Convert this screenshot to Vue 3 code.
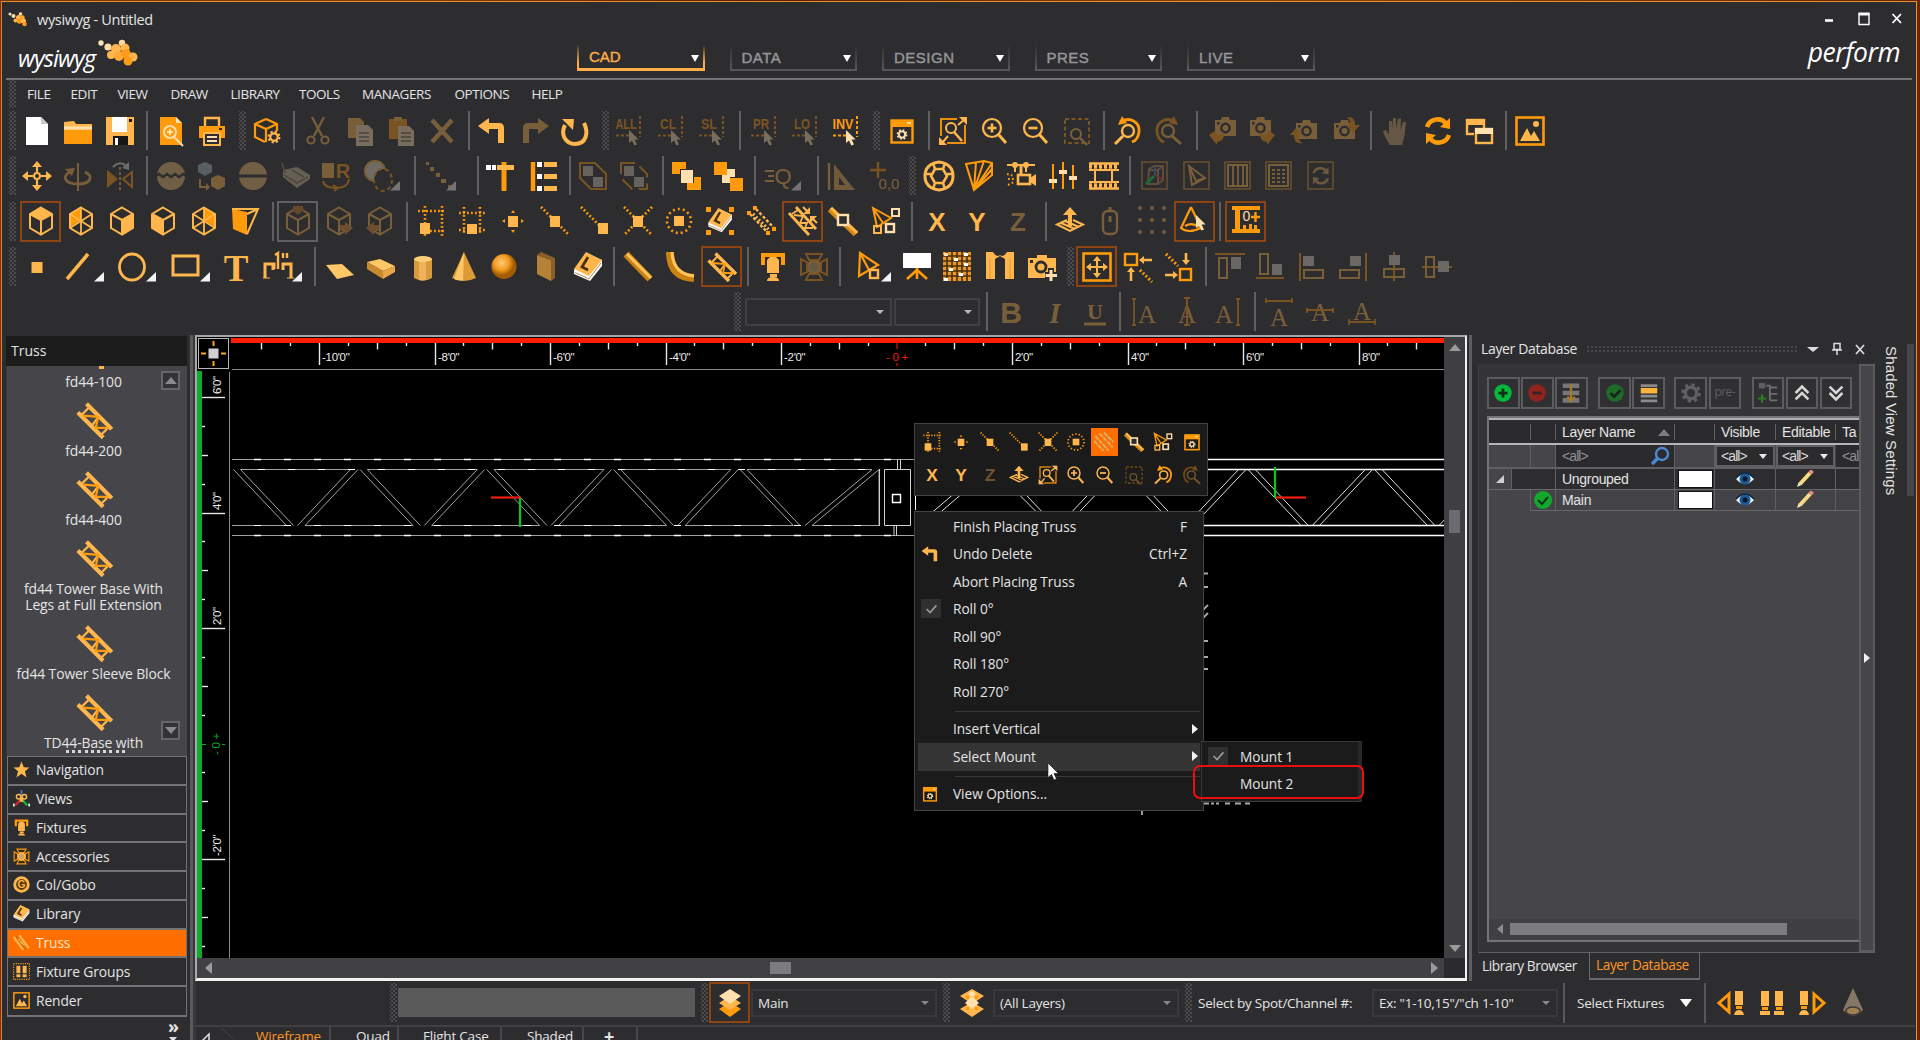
<script setup>
const L = '#ffb64d'
const O = '#ff9a0a'
const W = '#ffffff'
const P = '#ffdfae'
const D = '#2d2d30'

const s = (d, c = L, w = 2, x = '') => `<path d="${d}" fill="none" stroke="${c}" stroke-width="${w}" ${x}/>`
const f = (d, c = L) => `<path d="${d}" fill="${c}"/>`
const t = (v, x, y, size, c = L, x2 = '') =>
  `<text x="${x}" y="${y}" font-size="${size}" fill="${c}" text-anchor="middle" font-family="Liberation Sans, sans-serif" ${x2}>${v}</text>`
const sq = (x, y, w, h, c = L) => `<rect x="${x}" y="${y}" width="${w}" height="${h}" fill="${c}"/>`
const sr = (x, y, w, h, c = L, k = 2) =>
  `<rect x="${x}" y="${y}" width="${w}" height="${h}" fill="none" stroke="${c}" stroke-width="${k}"/>`
const ci = (x, y, r, c = L, k = 2, fill = 'none') =>
  `<circle cx="${x}" cy="${y}" r="${r}" fill="${fill}" stroke="${c}" stroke-width="${k}"/>`
const el = (x, y, rx, ry, c = L, k = 2, fill = 'none') =>
  `<ellipse cx="${x}" cy="${y}" rx="${rx}" ry="${ry}" fill="${fill}" stroke="${c}" stroke-width="${k}"/>`
const dot = 'stroke-dasharray="1.8 2.2"'
const dash = 'stroke-dasharray="3 2"'
const tri = (dx = 0) => `<g transform="translate(${dx} 0)">${f('M39 20V29.5H29Z', '#f2f2f2')}</g>`
const cur = (x, y, c = P) => `<g transform="translate(${x} ${y})">${f('M0 0V13L3 10.4L5.4 15.6L8 14.4L5.6 9.4H9.6Z', c)}</g>`

const hex = 'M15 1.5L26 8V22L15 28.5L4 22V8Z'
const inner = 'M4 8L15 14L26 8M15 14V28'
const cube = (extra = '') => extra + s(hex, L, 2) + s(inner, L, 2)
const sel = (v) =>
  t(v, 11, 12.5, 14, O, 'font-weight="bold" lengthAdjust="spacingAndGlyphs" textLength="' + (v.length > 2 ? 21 : 16) + '"') + s('M1 19.5H18', O, 2, dash) + s('M25 0V21', O, 2, dash) + cur(14, 14)
const mag = (x, y, c = L) => ci(x, y, 9, c, 2.2) + s(`M${x + 6} ${y + 6}L${x + 14} ${y + 15}`, c, 3)
const truss = (c = L) =>
  s('M1.500 8.500L22 29M8.500 1.500L29 22', c, 3.4) + s('M4 11L11 4M13 19L19 11M20 27L27 20', c, 1.8) + s('M6 11L18 12L16 21L26 21', c === L ? O : c, 1.8)
const gear = (x, y, r, c) =>
  ci(x, y, r * 0.62, c, r * 0.38) + `<circle cx="${x}" cy="${y}" r="${r * 0.9}" fill="none" stroke="${c}" stroke-width="${r * 0.35}" stroke-dasharray="${r * 0.36} ${r * 0.347}"/>`
const book = () =>
  f('M1 18L13 1L29 8V14L17 29L1 22Z', W) + f('M1 17L13 0L29 8L16 24Z', L) + s('M15 5L9 15L15 18', '#4b3208', 2.8) + s('M2 20.5L16 27L28 11', '#b98a4a', 1)
const A = (x, y) => t('A', x, y, 25, '#ffb64d', 'style="font-family:Liberation Serif,serif"')
const camera = (dx, dy) =>
  `<g transform="translate(${dx} ${dy})">` + f('M3 6H9L10 3H17L18 6H24V22H3Z') + ci(13.5, 14, 4.2, D, 2.4) + sq(5, 8, 2.5, 2.5, D) + '</g>'
const arrows4 = (a, b, c = L) =>
  s(`M15 ${a}V${b}M${a} 15H${b}`, c, 2) + f(`M15 ${a - 2}l4 5h-8zM15 ${b + 2}l4-5h-8zM${a - 2} 15l5-4v8zM${b + 2} 15l-5-4v8z`, c)
const sync = (c, k) =>
  s('M4 11C7 2 19 1 23 8', c, k) + f('M27 2V13L17 11Z', c) + s('M26 19C23 28 11 29 7 22', c, k) + f('M3 28V17L13 19Z', c)
const framed = (g) => sr(2, 1, 25, 27, '#c98a2e', 1.6) + g

const icons = {
  new: f('M4 1H19L26 8V29H4Z', W) + f('M19 1V8H26Z', '#c9c9c9'),
  open: f('M1 6L11 5L13 8H29V28H1Z', L) + sq(1, 14, 28, 14, O) + sq(1, 10.5, 28, 3, P),
  save: f('M1 1H29V29H1Z', L) + sq(7, 1, 15, 15, W) + sq(8, 20, 15, 9, '#161616') + sq(10, 22, 3, 7, W) + sq(24, 3, 3, 3, '#161616'),
  preview: f('M4 1H20L26 7V29H4Z', O) + f('M20 1V7H26Z', P) + ci(14, 16, 6, P, 2) + s('M18 21L27 30M14 13V19M11 16H17', P, 2),
  print: s('M8 10V2H22V10', L, 2.4) + f('M2 10H28V22H23V18H7V22H2Z', O) + sr(7, 17, 16, 12, L, 2) + s('M10 21H20M10 25H20', P, 2) + sq(22, 12, 3, 2, D),
  cubegear: s('M14 3L25 8V15M14 3L3 8V21L13 26M3 8L14 13L25 8M14 13V26', O, 2.2) + gear(22, 21, 6, L),
  cut: s('M9 1L19 20M21 1L11 20', L, 2.4) + ci(8, 24, 3.6) + ci(22, 24, 3.6),
  copy: f('M2 2H14L18 6V22H2Z') + f('M10 9H22L27 14V30H10Z', P) + s('M13 17H23M13 21H23M13 25H23', '#7a6a50', 1.6),
  paste: sq(2, 3, 18, 20, O) + sq(7, 1, 8, 4, L) + f('M11 10H22L27 15V30H11Z', P) + s('M14 17H24M14 21H24M14 25H24', '#7a6a50', 1.6),
  del: s('M5 4L25 26M25 4L5 26', L, 4.5),
  undo: f('M1 10L12 2V7H22Q27 7 27 12V27H21V13H12V18Z', L),
  redo: f('M29 10L18 2V7H8Q3 7 3 12V27H9V13H18V18Z', L),
  reload: s('M5 9C0 19 6 28 15 28C26 28 29 17 24 7', L, 4) + f('M2 3H14L13 14Z', L),
  all: sel('ALL'), cl: sel('CL'), sl: sel('SL'), pr: sel('PR'), lo: sel('LO'), inv: sel('INV'),
  viewopt: sr(4.5, 4.5, 21, 22, O, 2.4) + sq(4, 4, 22, 7, O) + sq(20, 6, 4, 2, P) + gear(15, 18.5, 5, P),
  fit: sr(3, 3, 24, 24, O, 1.8) + sq(19, 0, 11, 9, D) + sq(0, 20, 9, 10, D) + ci(13, 12, 5, L, 2) + s('M16 16L24 25', L, 2.6) + s('M20 9L27 3M10 20L4 27', L, 2) + f('M21 1H29V9ZM1 21V29H9Z', L),
  zin: mag(12, 12) + s('M7.5 12H16.500M12 7.500V16.500', L, 2.6),
  zout: mag(12, 12) + s('M7.500 12H16.500', L, 2.6),
  zsel: sr(3, 3, 24, 24, O, 2).replace('/>', ' stroke-dasharray="4 2.500"/>') + ci(14, 18, 5, L, 2) + s('M18 22L25 29', L, 2.400),
  zprev: ci(16, 15, 6, L, 2.4) + s('M11 20L3 28', L, 3) + s('M8 6C18 0 28 6 27 16Q26 24 20 26', O, 2.8) + f('M6 9L10 0L15 7Z', O),
  znext: ci(14, 15, 6, L, 2.4) + s('M18 20L27 28', L, 3) + s('M22 6C12 0 2 6 3 16Q4 24 10 26', O, 2.8) + f('M24 9L20 0L15 7Z', O),
  cam1: camera(4, -2) + f('M1 19L8 14V18Q14 20 16 16Q17 25 9 26V29Z', O),
  cam2: camera(0, -2) + f('M28 19L21 14V18Q15 20 13 16Q12 25 20 26V29Z', O),
  cam3: camera(4, 1) + f('M1 19L7 12L14 19H10V22Q10 26 14 27Q5 29 5 19Z', O),
  cam4: camera(0, 1) + f('M16 1Q24 0 24 9H29L22 17L15 9H19Q20 4 16 1Z', O),
  hand: f('M9 29Q3 20 2 15L5 14L8 18V5H11V13L12 2H15V13L17 2.500H20L19.500 14L22 6H25L23.500 20L21 29Z', '#c9a468'),
  sync: sync(O, 4.5),
  windows: sr(3, 4, 17, 14, L, 2.4) + sq(2, 3, 19, 6, L) + sq(10, 12, 18, 17, D) + sr(12, 13, 16, 14, L, 2.4) + sq(11, 12, 18, 6, P),
  image: sr(1.500, 1.500, 27, 27, O, 2.600) + f('M5 25L12 12L16 20L19 15L25 25Z', L) + `<circle cx="21" cy="8" r="3" fill="${L}"/>`,

  move: ci(15, 15, 3, L, 2) + s('M15 3V11M15 19V27M3 15H11M19 15H27', L, 2.200) + f('M15 0l5 6h-10zM15 30l5-6h-10zM0 15l6-5v10zM30 15l-6-5v10z'),
  rot: s('M15 2V30', L, 2) + s('M8 10C-3 16 3 23 15 23C28 23 31 15 22 11', L, 2.800) + f('M2 8L12 7L9 15Z'),
  mirror: s('M15 6V30', L, 1.8, dash) + f('M2 9L13 18L2 27Z', O) + s('M27 11L18 18L27 26Z', O, 2) + s('M8 6Q15-1 21 5', '#ddd', 2.200) + f('M24 1V9L17 7Z', '#ddd'),
  egg: el(15, 15, 14, 14, 'none', 0, '#e9b76a') + s('M0 15L3 13L7 16L11 13L15 16L19 13L23 16L27 13L30 15', D, 2.400),
  cubes: f('M8 1L15 4V11L8 15L1 11V4Z', '#a8b4bd') + f('M21 14L28 17V25L21 29L14 25V17Z', L) + s('M3 18V26H10', L, 2) + f('M9 22L13 26L9 30Z'),
  split: el(15, 15, 14, 14, 'none', 0, '#e9b76a') + sq(0, 13.500, 30, 3, D),
  surf: f('M3 9L17 6L30 14V18L17 27L3 16Z', '#c9b894') + s('M4 14L17 22L28 16M2 2L5 12M12 9L24 16', '#8a7a5a', 1.800),
  r3d: sq(1, 2, 12, 15, L) + t('R', 22, 17, 20, O, 'font-weight="bold"') + s('M2 20Q3 27 15 27Q27 27 28 18M12 24L17 27L13 30', O, 2),
  ovals: el(11, 10, 10, 10, L, 2, '#e8d9bd') + el(19, 19, 9, 11, O, 2, D).replace('/>', ' stroke-dasharray="4 3"/>') + tri(-3),
  steps: sq(1, 1, 3, 3) + sq(5, 6, 4, 4) + sq(11, 12, 4, 4) + sq(16, 18, 5, 4) + sq(23, 24, 5, 5) + tri(-8),
  t1: s('M18 1V30', O, 5) + sq(11, 4, 17, 5, L) + sq(0, 4, 5, 5, W) + sq(6, 4, 4, 5, W),
  t2: s('M4 1V30', O, 4.500) + [1, 13, 25].map((y) => sq(8, y, 5, 5, W) + sq(15, y, 13, 5, L)).join(''),
  oct1: s('M2 2H17L28 13V28H13L2 17Z', O, 2) + sq(5, 5, 10, 10, '#cbbfae') + sq(15, 16, 10, 10, '#cbbfae'),
  oct2: s('M2 2H17L28 13V28H13L2 17Z', O, 2, 'stroke-dasharray="14 6"') + sq(5, 5, 10, 10, '#cbbfae') + sq(15, 16, 10, 10, '#cbbfae'),
  lay1: sq(0, 1, 14, 12, O) + sq(15, 16, 14, 13, O) + sq(8, 8, 14, 14, D) + sq(9, 9, 12, 13, P),
  lay2: sq(14, 8, 8, 8, P) + sq(9, 14, 8, 8, P) + sq(1, 1, 13, 13, O) + sq(17, 17, 13, 13, O),
  q: t('Q', 18, 23, 22, L) + s('M0 10H9M3 15H9M0 20H9', L, 2) + tri(-3),
  setsq: s('M3 2V29', L, 2.400) + f('M8 3V29H29ZM13 16L19 24H13Z', '#e9a94f'),
  origin: s('M9 1V17M1 9H17', O, 2.400) + t('0,0', 20, 28, 15, L),
  globe: s('M15 1Q29 3 29 15Q29 27 15 29Q1 27 1 15Q1 3 15 1Z', L, 3) + s('M11 8H19L23 15L19 22H11L7 15Z', L, 2.600) + s('M9 2L11 8M21 2L19 8M9 28L11 22M21 28L19 22M1 13H7M29 13H23', L, 2.400),
  fan: s('M2 3L20 0L28 2V14L10 29ZM2 3L10 29M12 1L10 29M20 0L10 29M28 2L10 29M28 8L10 29', O, 2) ,
  movcam: s('M1 4H29M9 4V11M20 4V11', L, 2) + ci(9, 4, 2) + ci(20, 4, 2) + s('M15 4V13', L, 3) + sr(12, 14, 12, 9, L, 2.600) + f('M24 17L30 13V25L24 21Z') + s('M1 13L8 15M2 18H8M2 24L8 21', O, 2, dot),
  sliders: s('M5 3V28M15 1V28M25 4V28', O, 2) + sq(1, 18, 8, 4, P) + sq(11, 9, 8, 4, P) + sq(21, 15, 8, 4, P),
  film: s('M0 2.500H30M0 27.500H30', L, 2.600) + s('M0 9H30M0 21H30M6 9V21M23 9V21', L, 2) + s('M0 5.500H30M0 24.500H30', L, 4.500, dash),
  rgb: framed(s('M9 8L14 5H23V19L18 23H8ZM8 9H18V23M18 9L23 5', '#b8874a', 2) + s('M15 14V5', '#3c7adf', 2) + s('M15 14L22 18', '#e33', 2) + s('M14 15L6 23', '#0d4', 2.600)),
  fanb: framed(s('M7 5L23 17L10 24ZM7 5L14 20L23 17', L, 2)),
  cols: framed(sr(5, 4, 19, 21, L, 2) + s('M10 4V25M15 4V25M20 4V25', L, 1.800)),
  grid: framed(sr(5, 4, 19, 21, L, 2) + s('M8 9H22M8 13H22M8 17H22M8 21H22', L, 1.800, dash)),
  syncb: framed(`<g transform="translate(5 5) scale(.65)">${sync('#d8a55c', 4)}</g>`),

  ctop: cube(f('M15 1.500L26 8L15 14L4 8Z')),
  cwl: f('M4 8L15 1.500V14L4 21Z', O) + s(hex, L, 2) + s('M15 2V28M4 8L26 22M26 8L4 22', L, 1.800),
  cright: cube(f('M15 14L26 8V22L15 28.500Z')),
  cleft: cube(f('M15 14L4 8V22L15 28.500Z')),
  cwr: f('M26 8L15 1.500V14L26 21Z', O) + s(hex, L, 2) + s('M15 2V28M4 8L26 22M26 8L4 22', L, 1.800),
  cpersp: f('M2 3L17 6V29L3 23Z', O) + s('M2 3H28L17 28M17 8L28 3', L, 2),
  cdown: cube() + f('M10 0H20V3H22L15 9L8 3H10Z', '#c77b2a'),
  cbr: cube() + f('M16 19H21V16L29 22L21 29V25H16Z', '#e08a3a'),
  cbl: cube() + f('M14 19H9V16L1 22L9 29V25H14Z', '#e08a3a'),
  g1: s('M2 5H29M10 25H29', O, 2.600, dot) + s('M9 0V30M26 0V30', O, 2.600, dot) + sq(4, 17, 10, 11, L),
  g2: s('M2 7H28M2 24H28', O, 2.600, dot) + s('M7 1V29M23 1V29', O, 2.600, dot) + sq(10, 18, 10, 10, L),
  sdot: sq(10, 10, 10, 11, L) + f('M13 7L15 4L17 7ZM13 24L15 27L17 24ZM7 13L4 15L7 17ZM23 13L26 15L23 17Z', O),
  mid: s('M1 1L29 29', O, 2.800, dot) + sq(10, 10, 10, 11, L),
  end: s('M1 1L20 20', O, 2.800, dot) + sq(18, 17, 10, 11, L),
  inter: s('M1 1L29 29M29 1L1 29', O, 2.800, dot) + sq(10, 10, 10, 11, L),
  circ: ci(15, 15, 12, O, 2.600).replace('/>', ' stroke-dasharray="2 3"/>') + sq(10, 10, 10, 10, L),
  libs: sq(1, 1, 5, 5, O) + sq(24, 1, 5, 5, O) + sq(1, 24, 5, 5, O) + sq(24, 24, 5, 5, O) + `<g transform="translate(2.500 2) scale(.84)">${book()}</g>`,
  trs1: s('M4 8L22 27M10 3L28 22', L, 2.400, dash) + s('M7 8L24 25', L, 3.4, dot) + sq(1, 5, 4, 4, O) + sq(7, 0, 4, 4, O) + sq(20, 25, 4, 4, O) + sq(26, 21, 4, 4, O),
  trs2: s('M1 7L21 29M8 1L28 23', L, 2.800) + s('M4 8L10 4M6 9L15 10L12 17L19 17L17 22L25 22', L, 1.800) + s('M15 1L20 6M29 17L24 12', L, 2) + f('M22 1V8H15ZM22 10H29L22 17Z'),
  pnode: s('M2 3L28 28', '#d48a14', 6.500) + s('M3 2L29 27', L, 3) + `<rect x="10" y="9" width="10" height="10" fill="${D}" stroke="${P}" stroke-width="2.400"/>`,
  focus: s('M2 2L20 12L6 21ZM2 2L12 17', O, 2) + sr(21, 3, 7, 7, P, 2) + sr(3, 20, 7, 7, L, 2) + sr(15, 18, 8, 8, P, 2.400),
  x: t('X', 15, 24.500, 26, L, 'font-weight="bold"'), y: t('Y', 15, 24.500, 26, L, 'font-weight="bold"'), z: t('Z', 15, 24.500, 26, L, 'font-weight="bold"'),
  upl: f('M15 1L22 9H17V20H13V9H8Z') + s('M12 14L2 18.500L15 25L28 18.500L18 14M6 17L20 23M10 15L24 21', L, 2),
  mouse: `<rect x="8" y="5" width="14" height="23" rx="5" fill="none" stroke="${L}" stroke-width="2.400"/>` + s('M15 1V5M15 10V16', L, 3),
  dots: [3, 15, 27].map((y) => [3, 15, 27].map((x) => `<circle cx="${x}" cy="${y - 1}" r="1.900" fill="${L}"/>`).join('')).join(''),
  conec: s('M11 1L1 22Q8 28 21 22L11 1M5 20Q12 16 19 21', O, 2.200) + cur(16, 9),
  ruler: sq(1, 0, 28, 4, O) + sq(1, 23, 28, 4, O) + sq(4, 3, 5, 22, O) + sq(12, 19, 3, 5, O) + sq(18, 18, 3, 6, O) + sq(23, 19, 3, 5, O) + t('0', 15.500, 15, 14, P) + s('M20 11H29M24.500 6V16', O, 2.400),

  sq: sq(9.500, 10, 11, 11, L),
  line: s('M2 27L23 2', L, 3.500) + tri(),
  circle: el(15, 15, 12.5, 13, L, 2.800) + tri(),
  rect: sr(2, 4, 25, 19, L, 3) + tri(),
  T: t('T', 15, 28.500, 37, L, 'style="font-family:Liberation Serif,serif;font-weight:bold"'),
  dim: s('M2 26V12H11V17M10 18V12M28 26V12H20V18', L, 3) + s('M0 26H7M24 26H31', L, 1) + s('M12 3L15 1V17M20 1V6M24 1V6', L, 2.400) + tri(),
  plane: f('M1 13L17 12L29 23L12 27Z', '#ffc765'),
  box: f('M1 10L14 7L29 14L17 19Z', '#ffc765') + f('M1 10L17 19V27L1 17Z', '#c98a2e') + f('M17 19L29 14V20L17 27Z', '#e9a546'),
  cyl: f('M6 7V26Q15 31 24 26V7Z', '#d99a3e') + f('M11 9V28Q15 29 18 28V9Z', '#eeb25a') + el(15, 7, 9, 3, L, 0, '#ffcf78'),
  cone: f('M15 0L27 26Q15 32 3 26Z', '#e09a35') + f('M15 0L14 28.500Q8 28.500 5 27Z', '#ffc765'),
  sphere: `<defs><radialGradient id="ball" cx=".4" cy=".35"><stop offset="0" stop-color="#ffcb75"/><stop offset=".6" stop-color="#f29a20"/><stop offset="1" stop-color="#a45c00"/></radialGradient></defs><circle cx="15" cy="14.500" r="12.500" fill="url(#ball)"/>`,
  panel: f('M6 3L20 8V29L6 22Z', '#b58038') + f('M6 3L10 0L24 6V26L20 29V8Z', '#8a6028'),
  lib: book(),
  pipe: s('M3 2L27 27', '#c98210', 7) + s('M4 2L28 26', '#ffc35c', 3),
  curve: s('M4 0Q4 25 28 26', '#c98210', 8) + s('M6 0Q7 22 28 24', '#ffc35c', 3),
  truss: truss(),
  fixture: s('M5 13V3H25V13', O, 4) + f('M9 8L12 5H18L21 8V21H9Z') + sq(12, 22, 7, 3, L) + f('M9 29Q9 25 15 25Q21 25 21 29Z'),
  acc: ci(15, 15, 6, L, 3, '#c9a468') + s('M7 2H23L20 8H10ZM7 28H23L20 22H10ZM2 7V23L8 20V10ZM28 7V23L22 20V10Z', O, 2),
  fix2: s('M3 1L21 13L2 24ZM3 1L12 18', O, 2.200) + sr(13, 18, 8, 8, L, 2.400) + tri(-5),
  screen: sq(1, 1, 28, 15, W) + s('M15 16V27M15 18L5 27M15 18L25 27', O, 2.600),
  led: sq(1, 0, 28, 29, '#e9972c') + [4, 9, 14, 19, 24].map((v) => s(`M1 ${v}H29M${v + 1} 0V29`, '#4a3010', 1.600)).join('') + sq(2, 1, 4, 3, P) + sq(12, 6, 4, 3, W) + sq(22, 11, 4, 3, W) + sq(7, 16, 4, 3, W) + sq(17, 21, 4, 3, W) + sq(2, 26, 4, 3, W) + sq(22, 1, 4, 3, W),
  curtain: f('M1 0H8Q12 6 15 3Q18 6 22 0H29V27H20V7L15 4L10 7V27H1Z') + s('M5 6V27M25 6V27', '#e09a35', 1),
  camadd: `<g transform="translate(-1 -1)">` + f('M2 7H11V4H21V7H30V27H2Z') + ci(15, 16, 5, D, 2.8) + sq(4, 9, 3, 3, D) + '</g>' + s('M24 16V30M18 23H30', D, 6) + s('M24 18V29M18.500 23.500H30', P, 3),
  movebox: sr(1.500, 1.500, 27, 27, O, 2.600) + arrows4(6, 24, L),
  tl: sr(2, 2, 12, 11, O, 2.400) + s('M18 8H29M8 18V29', L, 2.600) + f('M16 8l5-4v8zM8 15l4 5h-8z') + s('M17 18L29 30', O, 3.200, dot),
  br: sr(16, 17, 11, 11, O, 2.400) + s('M1 23H12M22 1V10', L, 2.600) + f('M14 23l-5-4v8zM22 13l4-5h-8z') + s('M2 2L14 14', O, 3.200, dot),
  a1: s('M0 2H30', O, 2) + sr(4, 6, 8, 20) + sq(16, 5, 10, 12, '#d9cfc2'),
  a2: s('M0 26H28', O, 2) + sr(4, 2, 8, 20) + sq(16, 12, 10, 11, '#d9cfc2'),
  a3: s('M2 1V29', O, 2) + sq(5, 4, 11, 10, '#d9cfc2') + sr(6, 18, 19, 8),
  a4: s('M28 1V29', O, 2) + sq(12, 4, 11, 10, '#d9cfc2') + sr(2, 18, 19, 8),
  a5: s('M15 0V29', O, 2) + sq(10, 3, 11, 10, '#d9cfc2') + sr(5, 17, 20, 8),
  a6: s('M0 15H30', O, 2) + sr(4, 5, 8, 20) + sq(16, 9, 11, 11, '#d9cfc2'),
  B: t('B', 15, 26, 30, L, 'font-weight="bold"'),
  I: t('I', 15, 26, 29, L, 'style="font-family:Liberation Serif,serif;font-style:italic;font-weight:bold"'),
  U: t('U', 15, 22, 22, L, 'style="font-family:Liberation Serif,serif;font-weight:bold"') + sq(4, 25.500, 22, 3),
  A1: A(18, 26) + s('M5 2V28M3 2H7M3 28H7', O, 1.800), A2: A(15, 26) + s('M15 1V28M12 1H18M12 28H18', O, 2), A3: A(11, 26) + s('M25 2V28M23 2H27M23 28H27', O, 1.800),
  A4: A(15, 29) + s('M2 4H28M2 1V6M28 1V6', O, 1.800), A5: A(15, 24) + s('M2 13H28M2 11V16M28 11V16', O, 2), A6: A(15, 23) + s('M2 25H28M2 22V28M28 22V28', O, 1.800),

  layers: f('M15 14L26 21L15 29L4 21Z', O) + f('M15 8L26 15L15 22L4 15Z', L) + f('M15 1L26 8L15 16L4 8Z', P),
  layers2: f('M15 14L27 21L15 29L3 21Z', L) + f('M15 1L27 8L15 16L3 8Z', L) + f('M15 8L22 15L15 21L8 15ZM15 3L19 6L15 9L11 6Z', P) + f('M9 8h3v3h-3zM18 8h3v3h-3zM9 19h3v3h-3zM18 19h3v3h-3z', O),
  fprev: s('M13 6L3 15L13 24Z', O, 3) + sq(19, 3, 8, 14) + sq(20, 18, 6, 3, O) + f('M18 27Q19 22 23 22Q27 22 28 27Z'),
  fboth: sq(4, 3, 8, 15) + sq(18, 3, 8, 15) + sq(5, 19, 6, 3, O) + sq(19, 19, 6, 3, O) + sq(3, 23, 10, 4) + sq(17, 23, 10, 4),
  fnext: s('M17 6L27 15L17 24Z', O, 3) + sq(3, 3, 8, 14) + sq(4, 18, 6, 3, O) + f('M2 27Q3 22 7 22Q11 22 12 27Z'),
  spot: f('M15 0L25 22Q15 33 5 22Z', '#857866') + el(15, 23, 7, 4, '#3a3a3c', 1.500, '#a08050'),

  star: f('M15 1L19 11L29 11.500L21 18L24 29L15 22.500L6 29L9 18L1 11.500L11 11Z'),
  views: s('M15 0V9', '#3f78d8', 3) + s('M14 17L4 27', '#d22', 4) + s('M16 17L25 27', '#1b3', 4) + ci(10, 12, 4, L, 2.600) + ci(20, 12, 4, L, 2.600) + sq(12, 12, 6, 9, L) + sq(0, 24, 3, 5, '#eee') + sq(27, 24, 3, 5, '#eee'),
  gobo: ci(15, 15, 12, L, 5, '#5a3a10') + t('G', 15, 21, 18, L, 'font-weight="bold"'),
  trs: s('M1 5L18 28M11 2L28 25', '#ffb64d', 4) + s('M5 4L22 27', '#c96a10', 2) + s('M9 9L17 16M13 15L22 20', '#ffb64d', 2),
  trsel: s('M2 6L22 28M8 2L28 23M0 13L14 28M15 1L29 15', '#d9b06a', 3, 'stroke-dasharray="7 1.500"'),
  groups: sr(1, 1, 28, 28, O, 2).replace('/>', ' stroke-dasharray="2 2"/>') + sq(6, 5, 7, 13) + sq(17, 5, 7, 13) + sq(6, 20, 7, 5) + sq(17, 20, 7, 5),
}

const W0 = { '|': 2, ':': 7 }
function row(src, start = 0) {
  let pos = start
  return src.trim().split(/\s+/).map((tok) => {
    let [name, x] = tok.split('@')
    const dim = name[0] === '!'
    if (dim) name = name.slice(1)
    const on = name[0] === '#'
    const off = name[0] === '%'
    if (on || off) name = name.slice(1)
    const w = W0[name] || (on || off ? 41 : 30)
    const left = +x - w / 2
    const gap = left - pos
    pos = left + w
    return { name, dim, on, off, w, gap }
  })
}

const rows = [
  row(`:@12 new@37 open@78 save@120 |@147 preview@171 print@212 :@242 cubegear@267 |@294 !cut@318 !copy@361 !paste@402 !del@442 |@469
    undo@492 !redo@535 reload@575 :@605 !all@630 !cl@672 !sl@713 |@740 !pr@765 !lo@806 inv@847 :@876 viewopt@902 |@929 fit@953 zin@995 zout@1036
    !zsel@1077 |@1104 zprev@1127 !znext@1169 |@1197 !cam1@1223 !cam2@1262 !cam3@1304 !cam4@1346 |@1371 !hand@1396 sync@1438 windows@1479 |@1506 image@1530`),
  row(`:@12 move@37 !rot@78 !mirror@120 |@147 !egg@171 !cubes@212 !split@253 !surf@295 !r3d@336 !ovals@379 |@415 !steps@440 |@478 t1@501 t2@544 |@570
    !oct1@593 !oct2@634 |@663 lay1@687 lay2@728 |@755 !q@780 |@818 !setsq@841 !origin@884 :@912 globe@939 fan@979 movcam@1021 sliders@1063 film@1104
    |@1130 !rgb@1155 !fanb@1197 !cols@1238 !grid@1279 !syncb@1321`),
  row(`:@12 #ctop@40.5 cwl@81 cright@122 cleft@163 cwr@204 cpersp@245 |@273 !%cdown@297.5 !cbr@339 !cbl@380 |@407 g1@431 g2@472 sdot@513 mid@555 end@595 inter@638
    circ@679 libs@720 trs1@761 #trs2@802.5 pnode@843 focus@886 |@912 x@937 y@977 !z@1018 |@1046 upl@1070 !mouse@1110 !dots@1152 #conec@1194.5 |@1220 #ruler@1245.5`),
  row(`:@12 sq@37 line@80 circle@132 rect@186 T@236 dim@278 |@315 plane@340 box@381 cyl@423 cone@464 sphere@504 panel@546 lib@588 |@614 pipe@638 curve@681
    #truss@721.5 |@748 fixture@773 !acc@814 |@840 fix2@872 screen@917 led@957 curtain@1000 camadd@1042 :@1070 #movebox@1096.5 tl@1138 br@1179 |@1206
    !a1@1230 !a2@1271 !a3@1313 !a4@1353 !a5@1394 !a6@1437`),
]
const fontRow = row('|@987 !B@1011 !I@1055 !U@1095 |@1120 !A1@1144 !A2@1187 !A3@1228 |@1255 !A4@1279 !A5@1320 !A6@1362', 980)

const tabs = ['CAD', 'DATA', 'DESIGN', 'PRES', 'LIVE']
const menus = [['FILE', 43.5], ['EDIT', 47], ['VIEW', 53], ['DRAW', 60], ['LIBRARY', 68.5], ['TOOLS', 63], ['MANAGERS', 92.5], ['OPTIONS', 77], ['HELP', 60]]
const pieces = ['fd44-200', 'fd44-400', 'fd44 Tower Base With\nLegs at Full Extension', 'fd44 Tower Sleeve Block', 'TD44-Base with']
const nav = [['star', 'Navigation'], ['views', 'Views'], ['fixture', 'Fixtures'], ['acc', 'Accessories'], ['gobo', 'Col/Gobo'], ['lib', 'Library'], ['trs', 'Truss'], ['groups', 'Fixture Groups'], ['image', 'Render']]

const mini = ['g1', 'sdot', 'mid', 'end', 'inter', 'circ', 'trsel', 'pnode', 'focus', 'viewopt', 'x', 'y', '!z', 'upl', 'fit', 'zin', 'zout', '!zsel', 'zprev', '!znext']
const context = [
  { label: 'Finish Placing Truss', key: 'F' },
  { label: 'Undo Delete', key: 'Ctrl+Z', icon: 'undo' },
  { label: 'Abort Placing Truss', key: 'A' },
  { label: 'Roll 0°', check: true },
  { label: 'Roll 90°' },
  { label: 'Roll 180°' },
  { label: 'Roll 270°' },
  { sep: true },
  { label: 'Insert Vertical', sub: true },
  { label: 'Select Mount', sub: true, hot: true },
  { sep: true },
  { label: 'View Options...', icon: 'viewopt' },
]

// Drawing surface: origin is the upper-left corner inside the view frame
const OX = 197
const OY = 337
const X0 = 897.5 - OX
const Y0 = 744.5 - OY
const step = 115.5
const hTicks = []
for (let q = -23; q <= 18; q++) {
  const x = Math.round(X0 + (q * step) / 4) - 1
  if (q === 0 || x < 36 || x > 1245) continue
  const major = q % 4 === 0
  hTicks.push({ x, h: major ? 22 : q % 2 === 0 ? 6.5 : 3, label: major && `${q / 2}'0"` })
}
const vTicks = []
for (let q = -7; q <= 13; q++) {
  const y = Math.round(Y0 - (q * step) / 4) - 1
  if (q === 0 || y < 38 || y > 618) continue
  const major = q % 4 === 0
  vTicks.push({ y, w: major ? 23 : q % 2 === 0 ? 6 : 3, label: major && `${q / 2}'0"` })
}
const yt = 469.5 - OY
const yb = 525.5 - OY
const up = (p) => `M${p - 54 - OX} ${yb}L${p - 1 - OX} ${yt}M${p + 1 - OX} ${yt}L${p + 54 - OX} ${yb}H${p - 54 - OX}`
const down = (b) => `M${b - 55 - OX} ${yt}L${b - 2 - OX} ${yb}M${b + 2 - OX} ${yb}L${b + 55 - OX} ${yt}H${b - 55 - OX}`
const leftWeb = [232.5, 359, 485.7, 612.5, 739.2].map((p) => up(p)).join('') + [295.5, 422.3, 549, 675.7].map(down).join('') +
  `M${747 - OX} ${yt}L${800 - OX} ${yb}M${805 - OX} ${yb}L${872 - OX} ${yt}H${747 - OX}M${812 - OX} ${yb}L${879 - OX} ${yt}V${yb}H${812 - OX}`
const rightWeb = [1120.5, 1247, 1373.5].map(up).join('') + [1057, 1183.6, 1310.3, 1437].map(down).join('') +
  `M${917 - OX} ${yb}L${982 - OX} ${yt}M${925 - OX} ${yb}L${990 - OX} ${yt}M${994 - OX} ${yt}L${1050 - OX} ${yb}H${925 - OX}`
</script>

<template>
  <div class="app">
    <div class="win">
      <header class="title">
        <svg class="spark" viewBox="0 0 38 30"><g fill="#ffb64d"><circle cx="3" cy="4" r="3" fill="#ffe3b8" /><circle cx="10" cy="8" r="4" fill="#ffdca5" /><circle cx="24" cy="4" r="3.500" fill="#ffdca5" /><circle cx="20" cy="11" r="5" /><circle cx="28" cy="11" r="4.500" fill="#ffa32a" /><circle cx="14" cy="17" r="4" /><circle cx="22" cy="18" r="5.500" fill="#ff9a1a" /><circle cx="30" cy="18" r="5" /><circle cx="32" cy="24" r="4.500" fill="#ff9a1a" /></g></svg>
        <span class="t">wysiwyg - Untitled</span>
        <svg class="ctl" width="84" height="22" viewBox="0 0 84 22"><path d="M1 12.500h8" stroke="#fff" stroke-width="2.600" /><path d="M35 16.500V6h10v10.500z" stroke="#fff" stroke-width="1.400" fill="none" /><path d="M34.500 6h11" stroke="#fff" stroke-width="3" /><path d="M68.500 6L77 15M77 6L68.500 15" stroke="#fff" stroke-width="1.800" /></svg>
      </header>
      <div class="brand">
        <span class="logo">wysiwyg</span>
        <svg class="spark big" viewBox="0 0 40 28"><g fill="#ffb64d"><circle cx="3" cy="4" r="2.700" fill="#ffe3b8" /><circle cx="10" cy="8" r="3.600" fill="#ffdca5" /><circle cx="24" cy="4" r="3.200" fill="#ffdca5" /><circle cx="18" cy="10" r="5" /><circle cx="27" cy="9" r="4.500" /><circle cx="13" cy="16" r="4" /><circle cx="21" cy="17" r="5" fill="#ffa93a" /><circle cx="28" cy="15" r="5" fill="#ff9a1a" /><circle cx="35" cy="18" r="4.500" /><circle cx="30" cy="22" r="4.500" fill="#ff9a1a" /></g></svg>
        <nav class="tabs">
          <div v-for="(x, i) in tabs" :key="x" class="tab" :class="{ on: !i }"><span>{{ x }}</span><i></i></div>
        </nav>
        <span class="perform">perform</span>
      </div>
      <nav class="menu">
        <i class="grip"></i>
        <span v-for="m in menus" :key="m[0]" :style="{ width: m[1] + 'px' }">{{ m[0] }}</span>
      </nav>
      <div class="bars">
        <div v-for="(r, i) in rows" :key="i" class="bar">
          <div v-for="(it, k) in r" :key="k" class="tool" :class="{ sep: it.name === '|', grip: it.name === ':', on: it.on, off: it.off }" :style="{ width: it.w + 'px', marginLeft: it.gap + 'px' }">
            <svg v-if="icons[it.name]" viewBox="0 0 30 30" :class="{ dim: it.dim }" v-html="icons[it.name]"></svg>
          </div>
        </div>
        <div class="bar fonts">
          <i class="grip"></i>
          <div class="combo f1"><i></i></div>
          <div class="combo f2"><i></i></div>
          <div v-for="(it, k) in fontRow" :key="k" class="tool" :class="{ sep: it.name === '|' }" :style="{ width: it.w + 'px', marginLeft: it.gap + 'px' }">
            <svg v-if="icons[it.name]" viewBox="0 0 30 30" :class="{ dim: it.dim }" v-html="icons[it.name]"></svg>
          </div>
        </div>
      </div>

      <div class="body">
        <aside class="left">
          <div class="lhead">Truss</div>
          <div class="list">
            <div class="bit"></div>
            <div class="piece">fd44-100</div>
            <template v-for="p in pieces" :key="p">
              <svg class="pi" viewBox="0 0 30 30" v-html="icons.truss"></svg>
              <div class="piece">{{ p }}</div>
            </template>
            <div class="sbtn up"><i></i></div>
            <div class="sbtn dn"><i></i></div>
            <div class="dotsep"></div>
          </div>
          <div class="nav">
            <div v-for="n in nav" :key="n[1]" class="nitem" :class="{ on: n[1] === 'Truss' }"><svg viewBox="0 0 30 30" v-html="icons[n[0]]"></svg>{{ n[1] }}</div>
          </div>
          <div class="more"><b>»</b><i></i></div>
        </aside>
        <div class="split"></div>

        <div class="right">
          <div class="work">
            <div class="view">
              <div class="vtop">
                <svg class="canvas" width="1247" height="621" viewBox="0 0 1247 621">
                  <rect width="1247" height="621" fill="#000" />
                  <rect x="34" y="1" width="1213" height="5" fill="#ff1e00" />
                  <rect x="0" y="34" width="5" height="587" fill="#0cab2e" />
                  <path d="M35 32.500H1247M32.500 35V621" stroke="#8a8a8a" />
                  <rect x="1.500" y="1.500" width="30" height="30" fill="#000" stroke="#b5b5b5" />
                  <rect x="11.500" y="11.500" width="10" height="10" fill="#d0d0d4" />
                  <path d="M16.500 4v5M16.500 24v5M4 16.500h5M24 16.500h5" stroke="#f5a623" stroke-width="2" />
                  <g stroke="#e8e8e8" stroke-width="1.400">
                    <path v-for="k in hTicks" :key="'h' + k.x" :d="`M${k.x + 0.5} 6v${k.h}`" />
                    <path v-for="k in vTicks" :key="'v' + k.y" :d="`M5 ${k.y + 0.5}h${k.w}`" />
                  </g>
                  <g class="rt" fill="#eee">
                    <template v-for="k in hTicks" :key="'a' + k.x"><text v-if="k.label" :x="k.x + 3" y="24">{{ k.label }}</text></template>
                    <template v-for="k in vTicks" :key="'b' + k.y"><text v-if="k.label" :transform="`translate(24 ${k.y - 3}) rotate(-90)`">{{ k.label }}</text></template>
                  </g>
                  <g class="rt">
                    <text x="689" y="23.500" fill="#ff1e00">- 0 +</text>
                    <text transform="translate(23 418) rotate(-90)" fill="#0cab2e">- 0 +</text>
                  </g>
                  <path d="M700 6v6M700 26v3" stroke="#ff1e00" />
                  <path d="M5 407.500h4M25 407.500h3" stroke="#0cab2e" />
                  <g fill="none" stroke="#a2a2a2" stroke-width="1">
                    <path :d="leftWeb" clip-path="url(#cl)" />
                    <path d="M35 122.500H717M35 198.500H717" />
                    <path d="M57 122.500H717M57 198.500H717" stroke="#fff" stroke-width="1.500" stroke-dasharray="7 23" />
                    <path d="M61 132.500H674M57 188.500H674" stroke="#fff" stroke-dasharray="7 23" />
                    <path d="M688 132.500H713.500V188.500H687.500V132.500ZM682.500 132V189M700.500 122V132M703.500 122V132M697 189V199M699.500 189V199" stroke="#d0d0d0" />
                    <path d="M695.500 157.500h8v8h-8z" stroke="#fff" stroke-width="1.400" />
                    <path d="M718.500 157v16" stroke="#fff" />
                  </g>
                  <g fill="none" stroke="#dedede">
                    <path :d="rightWeb" />
                    <path d="M717 122.500H1247M790 132.500H1247M717 188.500H1247M717 198.500H1247" stroke="#fff" stroke-width="1.300" />
                  </g>
                  <clipPath id="cl"><rect x="35" y="100" width="700" height="120" /></clipPath>
                  <g stroke-width="2.200"><path d="M294 160.500H324" stroke="#f01c0c" /><path d="M323 161V190" stroke="#08c81c" /><path d="M1078 160.500H1109" stroke="#f01c0c" /><path d="M1078 130V161" stroke="#08c81c" /></g>
                  <path d="M1006 236.500h5M1006 250h5M1006 273l5-5M1006 281l5-5M1006 304h5M1006 320h5M1006 332h5M945 474v4M1007 466.500h5M1014 466.500h3M1019 466.500h3M1028 466.500h5M1038 466.500h6M1048 466.500h5" stroke="#a8a8a8" stroke-width="1.800" />
                </svg>
                <div class="vs"><i class="au"></i><b></b><i class="ad"></i></div>
              </div>
              <div class="hs"><i class="al"></i><b></b><i class="ar"></i><u></u></div>
            </div>
            <div class="gap"></div>

            <section class="panel">
              <div class="phead"><span>Layer Database</span><em></em>
                <svg width="62" height="16" viewBox="0 0 62 16"><path d="M0 6h12l-6 5z" fill="#ddd" /><path d="M27 2.500h6v6h-6zM25 9h10M30 9v5" stroke="#ddd" fill="none" stroke-width="1.500" /><path d="M49 4l8 9M57 4l-8 9" stroke="#ddd" stroke-width="1.700" /></svg>
              </div>
              <div class="pmain">
                <div class="pin">
                  <div class="pbtns">
                    <div><svg viewBox="0 0 24 24"><circle cx="12" cy="12" r="9.500" fill="#06b83c" /><path d="M12 7v10M7 12h10" stroke="#10301a" stroke-width="3" /></svg></div>
                    <div><svg viewBox="0 0 24 24"><circle cx="12" cy="12" r="9.500" fill="#8e241d" /><path d="M7 12h10" stroke="#3a2020" stroke-width="3" /></svg></div>
                    <div><svg viewBox="0 0 24 24"><path d="M3 4h18M3 12h18M3 20h18" stroke="#77777a" stroke-width="5" /><path d="M12 2v18M8 16l4 5 4-5" stroke="#a67c2c" stroke-width="2.500" fill="none" /></svg></div>
                    <div class="g12"><svg viewBox="0 0 24 24"><circle cx="12" cy="12" r="9.500" fill="#1f6b2a" /><path d="M7 12l4 4 7-7" stroke="#15251a" stroke-width="3" fill="none" /></svg></div>
                    <div><svg viewBox="0 0 24 24"><path d="M3 4h18M3 15.500h18M3 20.500h18" stroke="#8b8b8e" stroke-width="3" /><path d="M3 9.500h18" stroke="#ffb43c" stroke-width="6" /></svg></div>
                    <div class="g10"><svg viewBox="0 0 24 24" v-html="gear(12, 12, 10, '#5f5f62')"></svg></div>
                    <div><span>pre-</span></div>
                    <div class="g11"><svg viewBox="0 0 24 24"><path d="M2 1h7v6h-7z" fill="#5f5f62" /><path d="M10 4h4v16M14 6h8M14 13h8M14 20h8" stroke="#6d6d70" stroke-width="2" fill="none" /><path d="M1 18h9M5.500 13.500v9" stroke="#2f7a24" stroke-width="2.400" /></svg></div>
                    <div><svg viewBox="0 0 24 24"><path d="M5 12l7-7 7 7M5 19l7-7 7 7" stroke="#d8d8d8" stroke-width="2.800" fill="none" /></svg></div>
                    <div><svg viewBox="0 0 24 24"><path d="M5 5l7 7 7-7M5 12l7 7 7-7" stroke="#d8d8d8" stroke-width="2.800" fill="none" /></svg></div>
                  </div>
                  <div class="table">
                    <div class="tr th"><div></div><div></div><div class="nm">Layer Name<i></i></div><div></div><div>Visible</div><div>Editable</div><div>Ta</div></div>
                    <div class="tr flt"><div></div><div></div><div class="nm dk">&lt;all&gt;<svg width="20" height="20" viewBox="0 0 20 20"><circle cx="12" cy="8" r="6" fill="none" stroke="#4a8ad4" stroke-width="2.400" /><path d="M8 12L2 18" stroke="#4a8ad4" stroke-width="3.400" /></svg></div><div></div><div class="dd">&lt;all&gt;<i></i></div><div class="dd">&lt;all&gt;<i></i></div><div class="dk">&lt;al</div></div>
                    <div v-for="(n, i) in ['Ungrouped', 'Main']" :key="n" class="tr rw" :class="{ main: i }">
                      <div><svg v-if="!i" width="8" height="8" viewBox="0 0 8 8"><path d="M8 0v8H0z" fill="#d0d0d0" /></svg></div>
                      <div><svg v-if="i" width="18" height="18" viewBox="0 0 18 18"><circle cx="9" cy="9" r="9" fill="#12a82c" /><path d="M4 9l4 4 6-7" stroke="#0c3214" stroke-width="2" fill="none" /></svg></div>
                      <div class="nm">{{ n }}</div>
                      <div><b></b></div>
                      <div><svg width="20" height="14" viewBox="0 0 20 14"><path d="M1 7Q10-3 19 7Q10 17 1 7Z" fill="#e8f2fa" /><circle cx="10" cy="7" r="5.500" fill="#1c5a94" /><circle cx="10" cy="7" r="2.500" fill="#06192c" /><path d="M1 6Q10-4 19 6" stroke="#0d2a48" stroke-width="1.500" fill="none" /></svg></div>
                      <div><svg width="20" height="18" viewBox="0 0 20 18"><path d="M4 14L14 3" stroke="#f5dc80" stroke-width="4" /><path d="M14 3l2.500-2.500" stroke="#e98a8a" stroke-width="4" /><path d="M1 17l1.500-4.500 3 2.500z" fill="#f0e8d0" /></svg></div>
                      <div></div>
                    </div>
                    <div class="rest"></div>
                    <div class="ths"><i></i><b></b></div>
                  </div>
                </div>
                <div class="strip"></div>
              </div>
              <div class="ptabs"><span>Library Browser</span><span class="on">Layer Database</span></div>
            </section>
            <div class="side">
              <span>Shaded View Settings</span><b></b>
            </div>
          </div>

          <div class="status">
            <i class="grip"></i><div class="field"></div><i class="grip g2"></i>
            <div class="lb on"><svg viewBox="0 0 30 30" v-html="icons.layers"></svg></div>
            <div class="combo c1">Main<i></i></div><i class="grip g3"></i>
            <div class="lb l2"><svg viewBox="0 0 30 30" v-html="icons.layers2"></svg></div>
            <div class="combo c2">(All Layers)<i></i></div><i class="grip g3 g4"></i>
            <span class="st">Select by Spot/Channel #:</span>
            <div class="combo c3">Ex: "1-10,15"/"ch 1-10"<i></i></div>
            <i class="vsep"></i><span class="sf">Select Fixtures</span><i class="tri"></i><i class="vsep v2"></i>
            <div class="fx"><svg v-for="n in ['fprev', 'fboth', 'fnext', 'spot']" :key="n" viewBox="0 0 30 30" v-html="icons[n]"></svg></div>
          </div>
          <div class="btabs">
            <svg width="46" height="13" viewBox="0 0 46 13"><path d="M7 14L14 7v6" stroke="#ddd" fill="none" stroke-width="1.500" /><path d="M26 1L40 13" stroke="#444" /></svg>
            <span class="w">Wireframe</span><span class="q">Quad</span><span class="fc">Flight Case</span><span class="sh">Shaded</span><span class="pl">+</span>
          </div>
        </div>
      </div>
    </div>

    <div class="mini">
      <div v-for="m in mini" :key="m" :class="{ hot: m === 'trsel' }"><svg viewBox="0 0 30 30" :class="{ dim: m[0] === '!' }" v-html="icons[m.replace('!', '')]"></svg></div>
    </div>
    <div class="ctx">
      <template v-for="(c, i) in context" :key="i">
        <hr v-if="c.sep" />
        <div v-else class="ci" :class="{ hot: c.hot }">
          <span class="ic"><svg v-if="c.icon" viewBox="0 0 30 30" v-html="icons[c.icon]"></svg><em v-if="c.check"><svg viewBox="0 0 20 20"><path d="M5 10l4 4 7-8" fill="none" stroke="#9a9a9a" stroke-width="1.800" /></svg></em></span>
          <span class="cl">{{ c.label }}</span><span class="ck">{{ c.key }}</span><i v-if="c.sub"></i>
        </div>
      </template>
    </div>
    <div class="sub">
      <div class="ci"><span class="ic"><em><svg viewBox="0 0 20 20"><path d="M5 10l4 4 7-8" fill="none" stroke="#9a9a9a" stroke-width="1.800" /></svg></em></span>Mount 1</div>
      <div class="ci"><span class="ic"></span>Mount 2</div>
    </div>
    <div class="mark"></div>
    <svg class="pointer" width="14" height="20" viewBox="0 0 14 20"><path d="M1 1V15.500L4.500 12.500L7 18L9.500 17L7 11.500H11.500Z" fill="#fff" stroke="#111" stroke-width=".6" /></svg>
    <i class="flag"></i>
  </div>
</template>

<style>
body { margin: 0; background: #2d2d30; overflow: hidden; }
</style>
<style scoped>
* { box-sizing: border-box; }
i { font-style: normal; }
.app { position: relative; width: 1920px; height: 1040px; overflow: hidden; font-family: 'Open Sans', 'Noto Sans', sans-serif; color: #e4e4e4; font-size: 13.5px; background: linear-gradient(90deg, #7a3206, #8a3c06 20%, #5e1e04 40%, #904408 65%, #6a2604); padding: 1px 3px 0 1px; }
.win { height: 1039px; background: #2d2d30; border: 1px solid #e8902c; border-left-color: #d8822a; padding: 1px 1px 0 4px; display: flex; flex-direction: column; overflow: hidden; border-bottom: 0; }
.title { height: 36px; flex: none; display: flex; align-items: center; padding-left: 2px; padding-bottom: 4px; }
.spark { width: 20px; height: 15px; }
.title .t { margin-left: 9px; font-size: 14.5px; letter-spacing: -.33px; flex: 1; }
.ctl { margin-right: 7px; }
.brand { height: 41px; flex: none; display: flex; border-bottom: 2px solid #747476; margin-right: 3px; }
.logo { font-style: italic; font-size: 23.5px; letter-spacing: -.9px; font-weight: 500; margin: 3px 0 0 12px; width: 80px; color: #fff; line-height: 32px; }
.spark.big { width: 40px; height: 28px; margin: 0 0 0 0; }
.tabs { display: flex; gap: 25px; margin: 6px 0 0 439px; flex: 1; }
.tab { width: 127.5px; height: 26px; display: flex; align-items: center; justify-content: space-between; padding: 0 4px 0 10px; border: 2px solid; border-width: 0 2px 2px; border-image: linear-gradient(#2d2d30, #58585a) 1; color: #97979a; font: 500 15px 'Liberation Sans', sans-serif; letter-spacing: .5px; -webkit-text-stroke: .4px; }
.tab.on { color: #ffae45; border-image: linear-gradient(#2d2d30, #ffae45 75%) 1; border-bottom-width: 3px; letter-spacing: 0; }
.tab i { border: 4.5px solid transparent; border-top: 7px solid #fff; border-bottom: 0; margin-top: 3px; }
.perform { font-style: italic; font-size: 26.500px; color: #fff; line-height: 27px; margin-right: 12px; letter-spacing: -.5px; font-weight: 500; }
.menu { height: 28px; flex: none; display: flex; align-items: center; font-size: 13.5px; }
.menu span { letter-spacing: -.45px; white-space: nowrap; }
.menu .grip { margin: 0 11px 0 3px; height: 28px; width: 7px; }
.grip { flex: none; width: 7px; height: 39px; background-image: radial-gradient(#5a5a5d 1px, transparent 1.2px), radial-gradient(#5a5a5d 1px, transparent 1.2px); background-size: 4px 4px; background-position: 0 0, 2px 2px; opacity: .7; }
.bars { flex: none; height: 227px; margin-left: -6px; }
.bar { height: 45.3px; display: flex; align-items: center; }
.tool { flex: none; height: 41px; display: flex; align-items: center; justify-content: center; }
.tool.grip { height: 39px; }
.tool.sep { height: 39px; background: #606063; }
.tool.on { border: 2px solid #8e4412; }
.tool.off { border: 2px solid #606063; }
.tool svg { width: 30px; height: 30px; flex: none; overflow: visible; }
.dim { opacity: .36; }
.combo { border: 2px solid #404043; display: flex; align-items: center; justify-content: space-between; height: 28px; padding: 0 6px 0 5px; white-space: nowrap; }
.combo i { border: 4px solid transparent; border-top: 4px solid #b8b8b8; border-bottom: 0; margin-left: auto; }
.fonts .grip { margin-left: 734px; }
.fonts .f1 { width: 147px; margin-left: 4px; }
.fonts .f2 { width: 86px; margin-left: 2px; }
.body { flex: 1; display: flex; min-height: 0; margin-left: -6px; }
.left { width: 187px; flex: none; display: flex; flex-direction: column; padding-left: 6px; }
.lhead { margin-top: 1px; height: 30px; background: #1c1c1d; line-height: 30px; padding-left: 5px; font-size: 14px; flex: none; }
.list { position: relative; height: 390px; background: #46464a; overflow: hidden; text-align: center; flex: none; padding-right: 7px; border-left: 1px solid #3a3a3d; }
.bit { width: 5px; height: 3px; background: #ffb64d; margin: 0 auto; position: relative; left: 8px; }
.piece { line-height: 16px; font-size: 13.9px; letter-spacing: -.1px; margin-bottom: 12px; margin-top: -1px; white-space: pre; }
.bit + .piece { margin-top: 4.500px; margin-bottom: 12px; }
.pi { display: block; width: 37px; height: 37px; margin: 0 auto 5px; position: relative; left: 1px; }
.sbtn { position: absolute; right: 7px; width: 19px; height: 19px; background: #333336; border: 2px solid #66666a; display: flex; align-items: center; justify-content: center; }
.sbtn.up { top: 5px; } .sbtn.dn { bottom: 16px; }
.sbtn i { border: 6px solid transparent; }
.up i { border-bottom: 7px solid #8a8a8c; border-top: 0; } .dn i { border-top: 7px solid #8a8a8c; border-bottom: 0; }
.dotsep { position: absolute; left: 59px; bottom: 3px; width: 60px; height: 3px; background: repeating-linear-gradient(90deg, #d8d8d8 0 3px, transparent 3px 6.2px); }
.nav { flex: none; border: 1px solid #747477; margin-left: 1px; }
.nitem { height: 28.75px; border-bottom: 2px solid #747477; display: flex; align-items: center; gap: 6px; padding-left: 5px; font-size: 13.8px; letter-spacing: -.1px; background: #2d2d30; padding-bottom: 1px; }
.nitem:last-child { border-bottom-width: 1px; }
.nitem svg { width: 17px; height: 17px; }
.nitem.on { background: #ff6f00; color: #ffe6cc; }
.more { display: flex; flex-direction: column; align-items: flex-end; padding-right: 8px; line-height: 18px; font-size: 18px; }
.more i { border: 4px solid transparent; border-top: 5px solid #ddd; margin: 2px 2px 0; }
.split { width: 6px; margin: 0 2px 0 3px; background: #38383b; border-left: 3px solid #5a5a5d; flex: none; }
.right { flex: 1; display: flex; flex-direction: column; min-width: 0; margin-left: -3px; }
.work { display: flex; height: 646px; flex: none; }
.view { width: 1272px; border: 2px solid #a8a8aa; border-right-color: #f2f2f2; border-bottom: 3px solid #f2f2f2; flex: none; height: 646px; }
.vtop { display: flex; height: 621px; }
.canvas { display: block; flex: none; }
.rt text { font: 11.5px 'Liberation Sans', sans-serif; letter-spacing: -.3px; }
.vs { width: 21px; background: #3f3f42; display: flex; flex-direction: column; align-items: center; padding: 7px 0 6px; }
.vs b { width: 11px; height: 23px; background: #6c6c70; margin: 159px 0 auto; }
.au, .ad, .al, .ar { border: 6px solid transparent; width: 0; height: 0; }
.au { border-top: 0; border-bottom: 7px solid #9a9a9c; } .ad { border-bottom: 0; border-top: 7px solid #9a9a9c; }
.al { border-left: 0; border-right: 7px solid #9a9a9c; } .ar { border-right: 0; border-left: 7px solid #9a9a9c; }
.hs { height: 20px; background: #414144; display: flex; align-items: center; padding-left: 8px; }
.hs b { width: 21px; height: 12px; background: #7c7c7e; margin: 0 640px 0 558px; }
.hs .ar { margin-right: auto; }
.hs u { width: 21px; height: 20px; background: #2b2b2d; }
.gap { width: 3px; margin-left: 2px; background: #5e5e61; flex: none; }
.panel { width: 401px; flex: none; display: flex; flex-direction: column; padding-left: 4px; margin-left: 2px; font-size: 13.5px; }
.phead { height: 29px; display: flex; align-items: center; padding: 0 6px 2px 3px; flex: none; font-size: 14px; letter-spacing: -.35px; }
.phead em { flex: 1; height: 7px; margin: 0 10px 0 9px; background: radial-gradient(#48484b 1px, transparent 1.2px) 0 0 / 4px 4px; }
.pmain { display: flex; height: 589px; border-bottom: 1px solid #626265; border-left: 1px solid #3f3f42; flex: none; }
.pin { flex: 1; padding: 13px 0 0 8px; background: #353538; min-width: 0; }
.pbtns { display: flex; gap: 1.6px; height: 32px; }
.pbtns div { width: 32.500px; height: 32px; border: 2px solid #5c5c5f; background: #303033; display: flex; align-items: center; justify-content: center; flex: none; }
.pbtns svg { width: 22px; height: 22px; }
.pbtns span { color: #5e5e61; font-size: 12px; margin-top: -4px; letter-spacing: -.5px; }
.pbtns .g12 { margin-left: 9px; } .pbtns .g10 { margin-left: 8px; } .pbtns .g11 { margin-left: 9px; }
.table { margin-top: 7px; border: 1px solid #747477; border-width: 2px 0 2px 2px; height: 526px; background: #46464a; overflow: hidden; display: flex; flex-direction: column; font-family: 'Liberation Sans', sans-serif; font-size: 14px; letter-spacing: -.3px; }
.tr { display: grid; grid-template-columns: 42px 25px 119px 40px 61px 60px 40px; flex: none; }
.tr > div { border-right: 1.500px solid #606063; display: flex; align-items: center; padding-left: 6px; white-space: nowrap; }
.tr > .nm { justify-content: space-between; padding-right: 4px; }
.th { border-top: 2px solid #b0b0b0; border-bottom: 2px solid #b5b5b5; height: 27px; background: #2b2b2d; }
.th > div { margin: 4px 0; }
.th i { border: 6px solid transparent; border-top: 0; border-bottom: 7px solid #7c7c7f; }
.flt { height: 24px; border-bottom: 2px solid #606063; color: #8f8f92; letter-spacing: -.9px; }
.flt .dk { background: #2b2b2d; }
.flt .dd { border: 2px solid #606063; background: #2b2b2d; color: #d8d8d8; gap: 12px; padding-left: 4px; margin-right: 1px; }
.flt .dd i { border: 4px solid transparent; border-top: 5px solid #e8e8e8; border-bottom: 0; }
.rw { height: 21.200px; background: #2d2d30; border-bottom: 1px solid #68686b; }
.rw > div:first-child { background: #46464a; width: 23px; padding-left: 7px; }
.rw.main { background: #434347; }
.rw.main > div:first-child { width: auto; margin-bottom: -1px; }
.rw.main > div:nth-child(2) { padding-left: 3px; }
.rw > div:nth-child(n + 5) { justify-content: center; padding: 0; }
.rw > div:nth-child(4) { padding: 0 0 0 3px; }
.rw b { width: 35px; height: 18px; background: #fff; border: 1px solid #111; }
.rest { flex: 1; }
.ths { height: 20px; display: flex; align-items: center; padding-left: 8px; margin-bottom: 1px; background: #404043; }
.ths i { border: 5px solid transparent; border-left: 0; border-right: 6px solid #8c8c8e; }
.ths b { width: 277px; height: 12px; background: #7c7c7e; margin-left: 7px; }
.strip { width: 16px; background: #46464a; border: 2px solid #5c5c5f; }
.ptabs { display: flex; height: 27px; font-size: 13.700px; letter-spacing: -.42px; white-space: nowrap; }
.ptabs span { width: 109px; padding-left: 4px; line-height: 25px; }
.ptabs .on { color: #ff9620; border: 1px solid #6a6a6d; border-top: 0; border-bottom-width: 2px; width: 111px; padding-left: 6px; line-height: 23px; margin-left: 2px; }
.side { display: flex; padding: 9px 0 0 5px; flex: none; }
.side span { writing-mode: vertical-rl; font: 15px 'Liberation Sans', sans-serif; letter-spacing: .15px; padding-top: 2px; height: 160px; width: 20px; white-space: nowrap; }
.side b { width: 7px; height: 152px; background: #46464a; margin-left: 7px; }
.status { height: 46px; display: flex; align-items: center; border-bottom: 2px solid #404043; flex: none; padding-left: 195px; white-space: nowrap; letter-spacing: -.25px; padding-bottom: 1px; }
.field { width: 297px; height: 29px; background: #5a5a5a; margin: 0 4px 0 1px; }
.g2 { margin: 0 0 0 2px; }
.g3 { margin: 0 2px 0 6px; }
.g4 { margin-right: 5px; }
.lb { width: 41px; height: 41px; display: flex; align-items: center; justify-content: center; flex: none; }
.lb.on { border: 2px solid #8e4412; margin-left: 1px; }
.lb.l2 { margin-left: -1px; margin-right: 1px; }
.lb svg { width: 30px; height: 30px; }
.status .combo { border-color: #39393c; }
.c1 { width: 186px; margin-left: 1px; }
.c2 { width: 186px; }
.status .combo i { border-top-color: #88888a; }
.st { width: 174px; margin-left: 1px; }
.c3 { width: 186px; }
.vsep { width: 2px; height: 40px; background: #58585b; margin-left: 5px; }
.sf { width: 103px; margin-left: 12px; }
.tri { border: 6px solid transparent; border-top: 8px solid #fff; border-bottom: 0; }
.v2 { margin-left: 12px; }
.fx { display: flex; margin-left: 10px; gap: 10.500px; }
.fx svg { width: 30px; height: 30px; }
.btabs { display: flex; height: 13px; flex: none; line-height: 18px; font-size: 13.500px; letter-spacing: -.2px; white-space: nowrap; }
.btabs svg { flex: none; }
.btabs span { border-right: 2px solid #48484b; flex: none; }
.btabs .w { color: #ff9620; padding-left: 15px; width: 90px; }
.q { width: 68px; padding-left: 25px; } .fc { width: 103px; padding-left: 24px; } .sh { width: 82px; padding-left: 25px; } .pl { width: 54px; padding-left: 20px; font-size: 18px; font-weight: 700; }

.mini { position: absolute; left: 914px; top: 423px; width: 294px; height: 73px; background: #1b1b1b; border: 1px solid #434345; padding: 4px 0 0 3px; display: grid; grid-template-columns: repeat(10, 28.8px); grid-auto-rows: 33px; z-index: 2; }
.mini div { display: flex; align-items: center; justify-content: center; height: 28px; }
.mini svg { width: 20px; height: 20px; }
.mini .hot { background: #ff6f00; width: 27px; }
.ctx { position: absolute; left: 914px; top: 511px; width: 290px; height: 300px; background: #1b1b1b; border: 1px solid #434345; padding: 1px 3px; }
.ci { height: 27.500px; display: flex; align-items: center; font-size: 13.700px; white-space: nowrap; position: relative; letter-spacing: -.05px; padding-bottom: 1px; }
.ci.hot { background: #353536; }
.ic { width: 35px; display: flex; align-items: center; padding-left: 3px; }
.ic svg { width: 18px; height: 18px; }
.ic em { width: 20px; height: 19px; background: #303032; display: flex; align-items: center; justify-content: center; }
.cl { flex: 1; }
.ck { margin-right: 13px; }
.ci i { position: absolute; right: 2px; border: 5px solid transparent; border-left: 6px solid #f2f2f2; border-right: 0; }
.ctx hr { border: 0; border-top: 1px solid #38383a; margin: 5px 0 4px 37px; }
.sub { position: absolute; left: 1201px; top: 741px; width: 161px; height: 61px; background: #1b1b1b; border: 1px solid #38383a; border-right: 4px solid #28282a; padding: 1px 2px; }
.sub .ic { width: 36px; padding-left: 4px; }
.mark { position: absolute; left: 1193px; top: 765px; width: 171px; height: 34px; border: 2px solid #ed0e0e; border-radius: 7px; }
.pointer { position: absolute; left: 1047px; top: 762px; }
.flag { position: absolute; left: 1864px; top: 653px; border: 5px solid transparent; border-left: 6px solid #f2f2f2; border-right: 0; }
</style>
